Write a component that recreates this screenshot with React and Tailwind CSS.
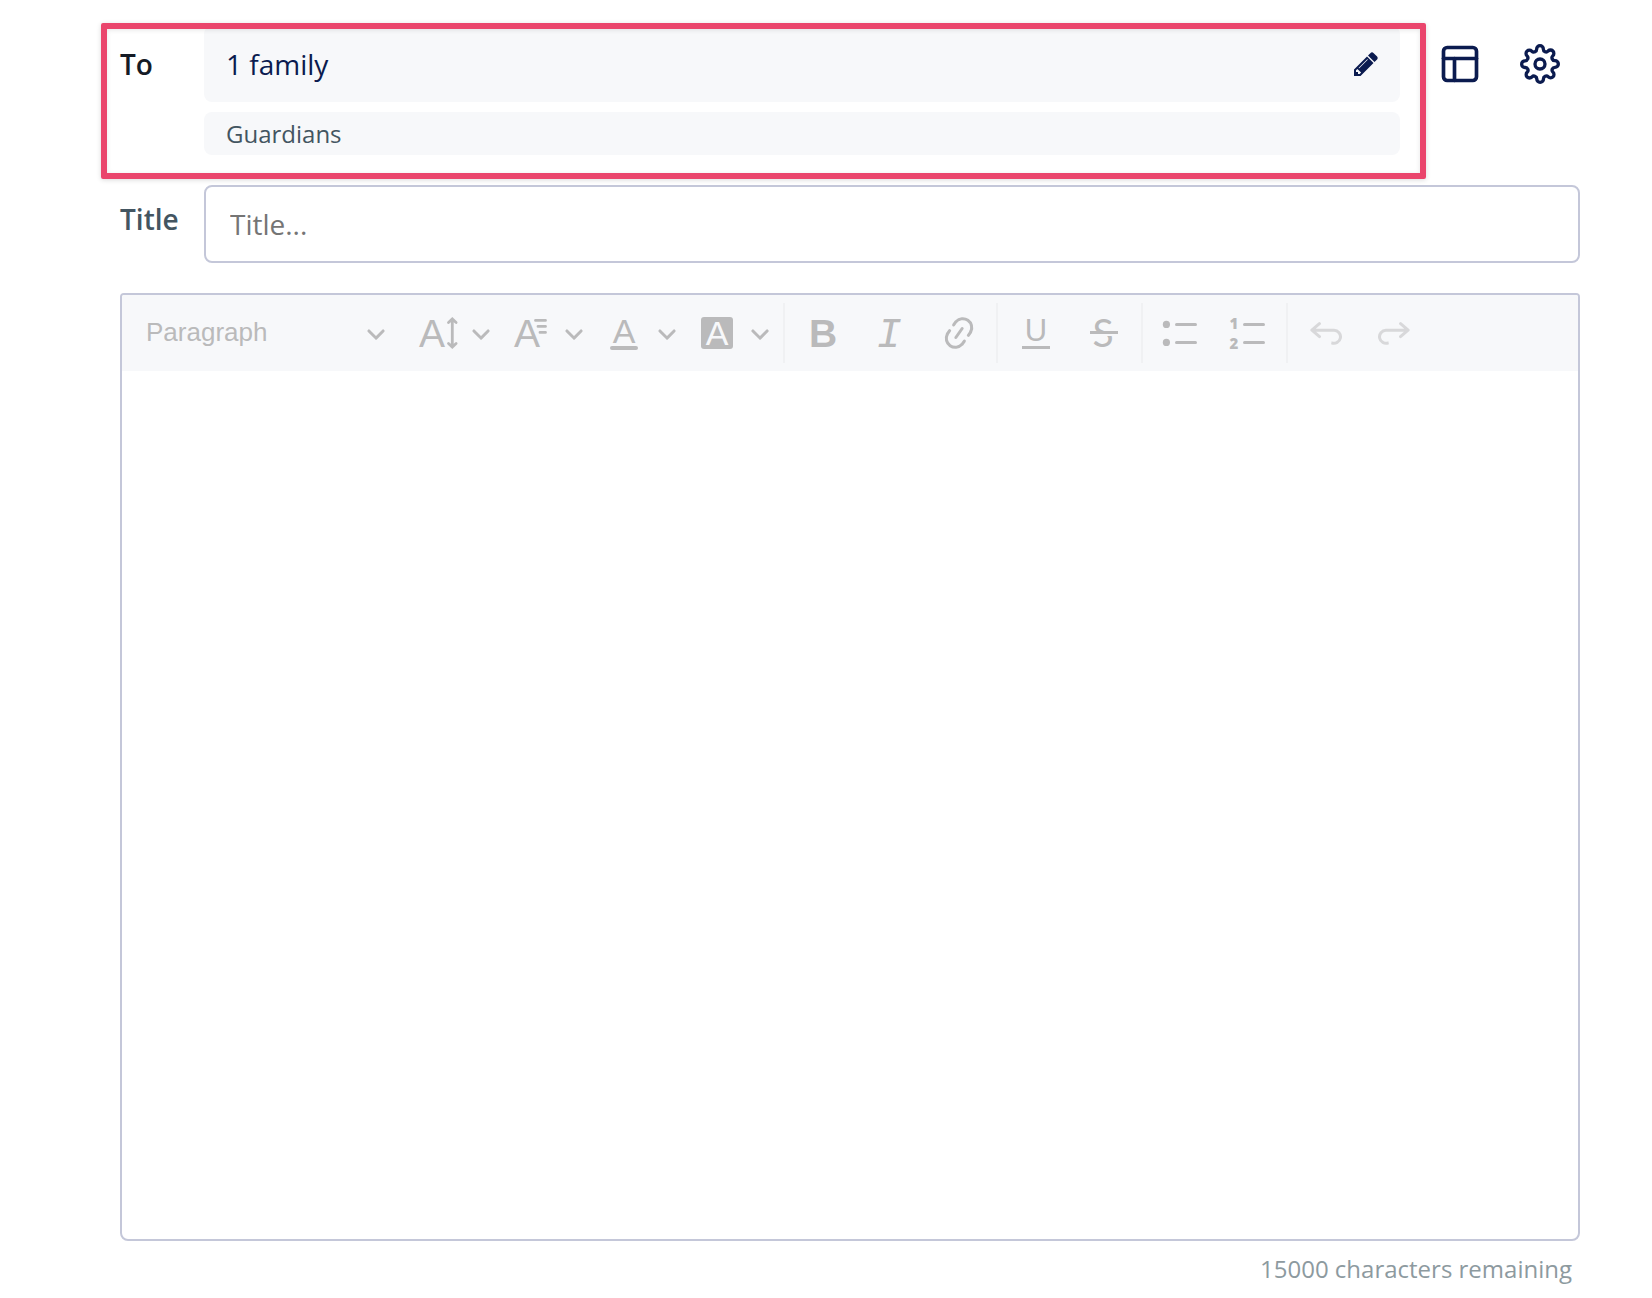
import React, { useState } from 'react';
import { FiLayout, FiSettings } from 'react-icons/fi';

const MAX_CHARACTERS = 15000;

const Icon = ({ children, size = 40 }) => (
    <svg viewBox={`0 0 ${size} ${size}`} className="w-10 h-10 shrink-0 overflow-visible" fill="currentColor" aria-hidden="true">
        {children}
    </svg>
);

const Chevron = () => (
    <svg viewBox="0 0 10 10" className="w-5 h-5 shrink-0 pointer-events-none" fill="currentColor" aria-hidden="true">
        <path d="M.941 4.523a.75.75 0 1 1 1.06-1.06l3.006 3.005 3.005-3.005a.75.75 0 1 1 1.06 1.06l-3.549 3.55a.75.75 0 0 1-1.168-.136L.941 4.523z" />
    </svg>
);

const PencilIcon = () => (
    <svg viewBox="0 0 1792 1792" className="w-7 h-7" fill="currentColor" aria-hidden="true">
        <path d="M491 1536l91-91-235-235-91 91v107h128v128h107zm523-928q0-22-22-22-10 0-17 7l-542 542q-7 7-7 17 0 22 22 22 10 0 17-7l542-542q7-7 7-17zm-54-192l416 416-832 832h-416v-416zm683 96q0 53-37 90l-166 166-416-416 166-165q36-38 90-38 53 0 91 38l235 234q37 39 37 91z" />
    </svg>
);

const FontSizeIcon = () => (
    <Icon>
        <text x="14" y="34" fontSize="39" textAnchor="middle">A</text>
        <path d="M34.3 7v26M30.5 9.5l3.8-3.5 3.8 3.5M30.5 30.5l3.8 3.5 3.8-3.5" fill="none" stroke="currentColor" strokeWidth="2.8" strokeLinecap="round" />
    </Icon>
);

const FontFamilyIcon = () => (
    <Icon>
        <text x="16" y="34" fontSize="39" textAnchor="middle">A</text>
        <path d="M24.500 7.4h10M27 13.4h7.500M29 19.4h5.500" fill="none" stroke="currentColor" strokeWidth="2.8" strokeLinecap="round" />
    </Icon>
);

const FontColorIcon = () => (
    <Icon>
        <text x="20" y="30" fontSize="34" textAnchor="middle">A</text>
        <rect x="6" y="33" width="28" height="4" rx="2" />
    </Icon>
);

const HighlightIcon = () => (
    <Icon>
        <rect x="4" y="4" width="32" height="32" rx="3" />
        <text x="20" y="32" fontSize="34" textAnchor="middle" className="fill-[#f7f8fa]">A</text>
    </Icon>
);

const BoldIcon = () => (
    <Icon>
        <text x="20" y="34" fontSize="39" textAnchor="middle" className="font-bold">B</text>
    </Icon>
);

const ItalicIcon = () => (
    <Icon>
        <text x="18" y="34" fontSize="42" textAnchor="middle" className="italic font-['Liberation_Mono',monospace]">I</text>
    </Icon>
);

const LinkIcon = () => (
    <Icon size={20}>
        <path d="m11.077 15 .991-1.416a.75.75 0 1 1 1.229.86l-1.148 1.64a.748.748 0 0 1-.217.206 5.251 5.251 0 0 1-8.503-5.955.741.741 0 0 1 .12-.274l1.147-1.639a.75.75 0 1 1 1.228.86L4.933 10.7l.006.003a3.75 3.75 0 0 0 6.132 4.294l.006.004zm5.494-5.335a.748.748 0 0 1-.12.274l-1.147 1.639a.75.75 0 1 1-1.228-.86l.86-1.23a3.75 3.75 0 0 0-6.144-4.301l-.86 1.229a.75.75 0 0 1-1.229-.86l1.148-1.64a.748.748 0 0 1 .217-.206 5.251 5.251 0 0 1 8.503 5.955zm-4.563-2.532a.75.75 0 0 1 .184 1.045l-3.155 4.505a.75.75 0 1 1-1.229-.86l3.155-4.506a.75.75 0 0 1 1.045-.184z" />
    </Icon>
);

const UnderlineIcon = () => (
    <Icon>
        <text x="20" y="28" fontSize="31" textAnchor="middle">U</text>
        <rect x="6" y="33" width="28" height="3" />
    </Icon>
);

const StrikeIcon = () => (
    <Icon>
        <text x="19" y="34" fontSize="39" textAnchor="middle" className="font-[Lato,sans-serif]">S</text>
        <rect x="6" y="18" width="28" height="5" className="fill-[#f7f8fa]" />
        <rect x="6" y="18" width="28" height="3" />
    </Icon>
);

const BulletListIcon = () => (
    <Icon>
        <circle cx="5.4" cy="11.4" r="3.6" />
        <circle cx="5.4" cy="29.4" r="3.6" />
        <rect x="14" y="10" width="22" height="3" rx="1.5" />
        <rect x="14" y="28" width="22" height="3" rx="1.5" />
    </Icon>
);

const NumberListIcon = () => (
    <Icon>
        <text x="5" y="16" fontSize="15" textAnchor="middle" className="font-extrabold font-['Open_Sans',sans-serif]">1</text>
        <text x="5" y="36" fontSize="15" textAnchor="middle" className="font-extrabold font-['Open_Sans',sans-serif]">2</text>
        <rect x="14" y="10" width="22" height="3" rx="1.5" />
        <rect x="14" y="28" width="22" height="3" rx="1.5" />
    </Icon>
);

const UNDO_PATH = 'm5.042 9.367 2.189 1.837a.75.75 0 0 1-.965 1.149l-3.788-3.18a.747.747 0 0 1-.21-.284.75.75 0 0 1 .17-.945L6.23 4.762a.75.75 0 1 1 .964 1.15L4.863 7.866h8.917A.75.75 0 0 1 14 7.9a4 4 0 1 1-1.477 7.718l.344-1.489a2.5 2.5 0 1 0 1.094-4.73l.008-.032H5.042z';

const UndoIcon = () => (
    <Icon size={20}>
        <path d={UNDO_PATH} />
    </Icon>
);

const RedoIcon = () => (
    <Icon size={20}>
        <path d={UNDO_PATH} transform="translate(20 0) scale(-1 1)" />
    </Icon>
);

const dropdowns = [
    { label: 'Font Size', icon: FontSizeIcon },
    { label: 'Font Family', icon: FontFamilyIcon },
    { label: 'Font Color', icon: FontColorIcon },
    { label: 'Font Background Color', icon: HighlightIcon },
];

const buttonGroups = [
    [
        { label: 'Bold', icon: BoldIcon },
        { label: 'Italic', icon: ItalicIcon },
        { label: 'Link', icon: LinkIcon },
    ],
    [
        { label: 'Underline', icon: UnderlineIcon },
        { label: 'Strikethrough', icon: StrikeIcon },
    ],
    [
        { label: 'Bulleted List', icon: BulletListIcon },
        { label: 'Numbered List', icon: NumberListIcon },
    ],
    [
        { label: 'Undo', icon: UndoIcon, disabled: true },
        { label: 'Redo', icon: RedoIcon, disabled: true },
    ],
];

const Toolbar = () => (
    <div
        role="toolbar"
        aria-label="Editor toolbar"
        className="flex flex-wrap items-center gap-[7px] px-[7px] py-2 bg-[#f7f8fa] text-[#bababb] rounded-t-xs font-['Liberation_Sans',Arial,sans-serif]"
    >
        <div className="relative flex items-center w-[275px] h-[60px]">
            <select aria-label="Heading" className="w-full h-full pl-[17px] pr-12 pb-0.5 text-[26px] appearance-none bg-transparent outline-none">
                <option>Paragraph</option>
                <option>Heading 1</option>
                <option>Heading 2</option>
            </select>
            <span className="absolute right-[18px] pointer-events-none">
                <Chevron />
            </span>
        </div>
        {dropdowns.map(({ label, icon: ButtonIcon }) => (
            <button key={label} type="button" aria-label={label} aria-haspopup="true" className="flex items-center justify-between w-[86px] h-[60px] pl-[7px] pr-[6px]">
                <ButtonIcon />
                <Chevron />
            </button>
        ))}
        {buttonGroups.map((group) => (
            <React.Fragment key={group[0].label}>
                <span className="w-0.5 h-[60px] bg-[#f0f1f3]" />
                {group.map(({ label, icon: ButtonIcon, disabled }) => (
                    <button
                        key={label}
                        type="button"
                        aria-label={label}
                        disabled={disabled}
                        className="flex items-center justify-center w-[61px] h-[60px] disabled:opacity-50"
                    >
                        <ButtonIcon />
                    </button>
                ))}
            </React.Fragment>
        ))}
    </div>
);

const App = () => {
    const [title, setTitle] = useState('');
    const [message, setMessage] = useState('');

    return (
        <div className="flex flex-col min-h-screen pt-[26px] pb-[11px] pl-[120px] pr-[72px] bg-white font-['Open_Sans',sans-serif]">
            {/* Recipients */}
            <div className="flex items-start">
                <div className="relative flex flex-1 items-start">
                    <span className="flex items-center w-[84px] h-[76px] text-[28px] font-semibold text-[#151b26]">To</span>
                    <div className="flex flex-col flex-1 gap-[10px]">
                        <div className="flex items-center justify-between h-[76px] pl-[22px] pr-5 rounded-lg bg-[#f7f8fa] text-[#0b1b4f]">
                            <span className="text-[28px]">1 family</span>
                            <button type="button" aria-label="Edit recipients">
                                <PencilIcon />
                            </button>
                        </div>
                        <div className="flex items-center h-[43px] px-[22px] rounded-lg bg-[#f7f8fa] text-2xl text-[#435561]">
                            Guardians
                        </div>
                    </div>
                    <div className="absolute -top-[3px] -bottom-[24px] -left-[19px] -right-[26px] z-10 border-6 border-[#ea456c] rounded-xs shadow-[0_1px_5px_rgba(0,0,0,0.15),inset_0_1px_5px_rgba(0,0,0,0.1)] pointer-events-none" />
                </div>
                <div className="flex ml-5 text-[#0b1b4f]">
                    <button type="button" aria-label="Templates" className="flex items-center justify-center w-20 h-[76px]">
                        <FiLayout size={44} />
                    </button>
                    <button type="button" aria-label="Settings" className="flex items-center justify-center w-20 h-[76px]">
                        <FiSettings size={40} />
                    </button>
                </div>
            </div>

            {/* Title */}
            <div className="flex items-start mt-[30px]">
                <label htmlFor="title" className="w-[84px] pt-[14px] text-[28px] leading-10 font-semibold text-[#435561]">Title</label>
                <input
                    id="title"
                    type="text"
                    value={title}
                    onChange={(e) => setTitle(e.target.value)}
                    placeholder="Title..."
                    className="flex-1 min-w-0 h-[78px] px-6 text-[28px] border-2 border-[#c4c7d9] rounded-lg outline-none placeholder:text-[#757575]"
                />
            </div>

            {/* Editor */}
            <div className="flex flex-col flex-1 mt-[30px] border-2 border-[#c4c7d9] rounded-t-sm rounded-b-lg">
                <Toolbar />
                <textarea
                    aria-label="Message"
                    value={message}
                    maxLength={MAX_CHARACTERS}
                    onChange={(e) => setMessage(e.target.value)}
                    className="flex-1 w-full p-6 text-[28px] resize-none outline-none"
                />
            </div>
            <p className="mt-[10px] pr-2 text-right text-2xl leading-9 text-[#8d9a9f]">
                {MAX_CHARACTERS - message.length} characters remaining
            </p>
        </div>
    );
};

export default App;
